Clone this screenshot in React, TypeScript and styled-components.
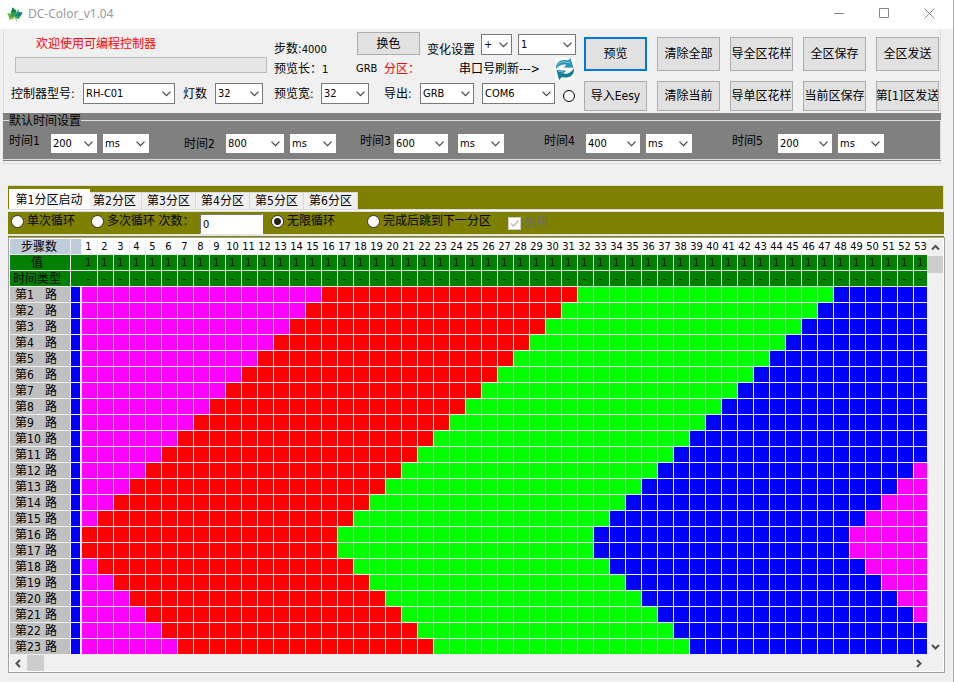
import React from "react";
import styled, { createGlobalStyle, css } from "styled-components";

const uiFont = `"DejaVu Sans Condensed", "Noto Sans CJK SC", sans-serif`;

const GlobalStyle = createGlobalStyle`
  *, *::before, *::after { box-sizing: border-box; }
  html, body, #root { height: 100%; }
  body {
    margin: 0;
    overflow: hidden;
    background: #f0f0f0;
    color: #000;
    font: 12px/14px ${uiFont};
  }
  button, input, select { font: inherit; color: inherit; margin: 0; }
`;

const Window = styled.div`
  height: 100%;
  display: flex;
  flex-direction: column;
  border-right: 1px solid #a9a9a9;
`;

/* Title bar */

const TitleBar = styled.header`
  flex: none;
  display: flex;
  align-items: center;
  height: 29px;
  padding: 0 1px 2px 7px;
  background: #fff;
`;

const Title = styled.h1`
  flex: 1;
  margin: 0 0 0 5px;
  color: #999;
  font: 12px/16px "Noto Sans", sans-serif;
`;

const CaptionButton = styled.button`
  width: 45px;
  height: 26px;
  padding: 0;
  border: 0;
  background: none;
  display: grid;
  place-items: center;
`;

/* Settings panel */

const SettingsPanel = styled.section`
  flex: none;
  margin: 0 12px 0 3px;
  padding-bottom: 2px;
  border: 1px solid #dcdcdc;
  border-top: 0;
`;

const Controls = styled.div`
  display: flex;
  height: 84px;
  padding: 3px 1px 0 7px;
`;

const DeviceColumn = styled.div`
  flex: none;
  width: 263px;
`;

const Welcome = styled.p`
  margin: 5px 0 6px 25px;
  color: #f00;
`;

const Progress = styled.div`
  width: 252px;
  height: 16px;
  margin: 0 0 10px 4px;
  border: 1px solid #bcbcbc;
  background: #e6e6e6;
`;

const FieldRow = styled.div<{ $columns: string; $height: number }>`
  display: grid;
  grid-template-columns: ${(p) => p.$columns};
  height: ${(p) => p.$height}px;
  align-items: center;
  white-space: nowrap;
`;

const PreviewColumn = styled.div`
  flex: none;
  width: 310px;
`;

const Small = styled.span`
  font-size: 11px;
`;

const Danger = styled.span`
  color: #f00;
`;

const LowText = styled.span`
  align-self: end;
`;

const SelectBox = styled.span<{ $width: number; $flat?: boolean }>`
  position: relative;
  display: block;
  flex: none;
  width: ${(p) => p.$width}px;
  height: ${(p) => (p.$flat ? 19 : 21)}px;

  select {
    appearance: none;
    display: block;
    width: 100%;
    height: 100%;
    padding: 0 0 0 2px;
    border: ${(p) => (p.$flat ? "0" : "1px solid #7a7a7a")};
    border-radius: 0;
    background: #fff;
    font-size: 11px;
    outline: 0;
  }

  svg {
    position: absolute;
    right: 4px;
    top: calc(50% - 3px);
    pointer-events: none;
  }
`;

const IconButton = styled.button`
  display: block;
  width: 20px;
  height: 22px;
  padding: 0;
  border: 0;
  background: #fff;
`;

const StatusLamp = styled.span`
  width: 12px;
  height: 12px;
  margin-top: 5px;
  border: 1px solid #000;
  border-radius: 50%;
  background: #f8f8f8;
`;

const PushButton = styled.button<{ $active?: boolean }>`
  min-width: 0;
  padding: 0;
  border: ${(p) => (p.$active ? "2px solid #0078d7" : "1px solid #adadad")};
  border-radius: 0;
  background: #e1e1e1;
  white-space: nowrap;
  display: flex;
  align-items: center;
  justify-content: center;
  overflow: hidden;
`;

const ColorButton = styled(PushButton)`
  width: 63px;
  height: 23px;
  align-self: start;
`;

const ActionGrid = styled.div`
  flex: 1;
  min-width: 0;
  display: grid;
  grid-template-columns: repeat(5, minmax(0, 1fr));
  grid-template-rows: 34px 30px;
  gap: 10px;
  padding-top: 5px;
`;

const TimeBand = styled.div`
  margin: 0 -1px;
  padding-bottom: 1px;
  background: #808080;
`;

const TimeSet = styled.fieldset`
  margin: 0;
  padding: 7px 0 6px 6px;
  border: 1px solid #dcdcdc;
  border-left: 0;
  display: grid;
  grid-template-columns: 175fr 176fr 184fr 188fr 208fr;

  legend {
    height: 14px;
    padding: 0;
    line-height: 16px;
  }
`;

const TimeGroup = styled.div<{ $gap: number }>`
  display: flex;
  align-items: flex-start;
  gap: ${(p) => p.$gap}px;
`;

const TimeLabel = styled.label<{ $width: number; $low?: boolean }>`
  width: ${(p) => p.$width}px;
  margin-right: -${(p) => (p.$width > 34 ? 6 : 10)}px;
  padding-top: ${(p) => (p.$low ? 3 : 0)}px;
`;

/* Zones */

const Zones = styled.section`
  flex: 1;
  min-height: 0;
  display: flex;
  flex-direction: column;
  margin: 21px 8px 9px 8px;
`;

const TabStrip = styled.div`
  flex: none;
  display: flex;
  align-items: flex-end;
  height: 24px;
  margin-right: 1px;
  padding-left: 1px;
  border: 1px solid #dcdcdc;
  border-width: 1px 1px 0 0;
  background: #808000;
`;

const Tab = styled.button<{ $active?: boolean }>`
  width: 54px;
  height: 17px;
  padding: 0;
  border: 1px solid #d9d9d9;
  border-width: 1px 1px 0 0;
  background: #f0f0f0;
  white-space: nowrap;

  ${(p) =>
    p.$active &&
    css`
      z-index: 1;
      width: 81px;
      height: 20px;
      margin-right: -2px;
      background: #fff;
      border-color: #fff;
    `}
`;

const TabEdge = styled.div`
  flex: none;
  height: 3px;
  margin: 0 4px 0 1px;
  border: 1px solid #d9d9d9;
  border-width: 1px 1px 1px 0;
  background: #fff;
`;

const LoopBar = styled.div`
  flex: none;
  display: flex;
  align-items: flex-start;
  height: 25px;
  margin-right: 1px;
  padding: 2px 0 0 3px;
  border-bottom: 1px solid #808000;
  background: linear-gradient(#808000, #808000) top / 100% 22px no-repeat #e8e8d8;
`;

const Choice = styled.label<{ $width: number }>`
  display: flex;
  align-items: center;
  gap: 3px;
  width: ${(p) => p.$width}px;
  white-space: nowrap;

  input {
    appearance: none;
    flex: none;
    width: 13px;
    height: 13px;
    border: 1px solid #333;
    border-radius: 50%;
    background: #fff;
  }

  input:checked {
    background: radial-gradient(circle, #222 0 3px, #fff 4px);
  }
`;

const CountInput = styled.input`
  width: 63px;
  height: 20px;
  margin-right: 8px;
  padding: 0 0 0 2px;
  border: 1px solid #7a7a7a;
  border-color: #7a7a7a #fff #fff #7a7a7a;
  border-radius: 0;
  background: #fff;
  font-size: 11px;
`;

const EnableChoice = styled.label`
  display: grid;
  grid-template-columns: 13px auto;
  gap: 3px;
  align-items: center;
  margin-top: 2px;
  color: #6b6b7c;

  input, svg {
    grid-area: 1 / 1;
  }

  input {
    appearance: none;
    width: 13px;
    height: 13px;
    border: 1px solid #ccc;
    background: #fff;
  }
`;

/* Step grid */

const GridFrame = styled.div`
  flex: 1;
  min-height: 0;
  display: grid;
  grid-template-columns: minmax(0, 1fr) 16px;
  grid-template-rows: minmax(0, 1fr) 16px;
  border: 1px solid #a0a0a6;
  outline: 1px solid #fff;
  outline-offset: -2px;
  padding: 1px;
  background: #f0f0f0;
`;

const GridView = styled.div`
  overflow: hidden;
`;

const StepTable = styled.table`
  width: 920px;
  table-layout: fixed;
  border-collapse: separate;
  border-spacing: 0;

  th, td {
    height: 16px;
    padding: 0 2px 0 0;
    border: 1px solid #f0f0f0;
    border-width: 0 1px 1px 0;
    font-weight: normal;
    font-size: 11px;
    line-height: 14px;
    text-align: center;
    white-space: nowrap;
    overflow: visible;
  }

  th:first-child { font-size: 12px; }
  tbody th:first-child { padding-right: 6px; }
  col.label { width: 61px; }
  col.marker { width: 11px; }
`;

const StepRow = styled.tr`
  th { background: #fff; }
  th:nth-child(-n + 2) { background: #bfcddb; }
`;

const GreenRow = styled.tr`
  th, td { background: #008000; }
  th:nth-child(2) { border-right-width: 0; }
`;

const RowLabel = styled.th`
  background: #c0c0c0;

  span {
    display: inline-block;
    width: 30px;
    text-align: left;
  }
  span + span { width: 14px; }
`;

const Cell = styled.td<{ $color: string }>`
  background: ${(p) => p.$color};
`;

const MarkerCell = styled.td`
  background: #00f;

  && { border-right-width: 2px; }
`;

const ScrollTrack = styled.div<{ $vertical?: boolean }>`
  display: flex;
  flex-direction: ${(p) => (p.$vertical ? "column" : "row")};
  background: #f0f0f0;

  > :last-child { ${(p) => (p.$vertical ? "margin-top" : "margin-left")}: auto; }
`;

const ScrollButton = styled.button`
  flex: none;
  width: 17px;
  height: 17px;
  padding: 0;
  border: 0;
  background: none;
  display: grid;
  place-items: center;
`;

const ScrollThumb = styled.div`
  width: 17px;
  height: 17px;
  background: #cdcdcd;
`;

const Chevron = () => (
  <svg width="9" height="6" viewBox="0 0 9 6" fill="none" stroke="#444" strokeWidth="1.2" aria-hidden="true">
    <path d="M0.5 0.7 4.5 4.7 8.5 0.7" />
  </svg>
);

const ScrollArrow = ({ d }: { d: string }) => (
  <svg width="9" height="9" viewBox="0 0 9 9" fill="none" stroke="#505050" strokeWidth="2" aria-hidden="true">
    <path d={d} />
  </svg>
);

const Leaf = () => (
  <svg width="16" height="16" viewBox="0 0 16 16" aria-hidden="true">
    <path d="M8 10 2.5 13.8 1.8 10.8 0.2 7 4.4 7.8z" fill="#5fb548" />
    <path d="M8 10 2.6 13.4 7 13.2z" fill="#a7c83c" />
    <path d="M8 10 4 6.4 5.4 1.2 8.7 4.3 9.5 7z" fill="#087c43" />
    <path d="M4 7.6 5 6.6 9 6 10 9 8 10.5 3.5 11z" fill="#2fa04c" />
    <path d="M8 10 9.3 5.8 12 3 11.6 6.2z" fill="#48b649" />
    <path d="M8 10 11.3 6 15.7 6.4 14.4 9 12.6 11.2z" fill="#187c88" />
    <path d="M8 10 12.6 10.7 11.6 13.2 9 12z" fill="#2aa453" />
    <path d="M8 10 9.6 15" stroke="#4a9468" strokeWidth="0.7" />
  </svg>
);

const RefreshIcon = () => (
  <svg width="20" height="22" viewBox="0 0 20 22" aria-hidden="true">
    <path d="M1 11C0.5 4 6.5 0.8 13 2.6L15.5 0 18.5 9.8 8.5 9.4 11.4 6.8C8 5.8 4.5 7 1 11z" fill="#2796b5" />
    <path d="M2.2 7.4C4.2 3.8 9 3 14 4.8L15.6 3" fill="none" stroke="#7fcbdc" strokeWidth="1" />
    <path d="M19 10.5C19.8 18 13 21 7 19L4 22 1.5 12 11 12.8 8.4 15.4C12 16.6 15.5 15 19 10.5z" fill="#127d9d" />
    <path d="M3 13.4 8 13.8 6.4 15.8" fill="none" stroke="#68bdd2" strokeWidth="1" />
  </svg>
);

type SelectProps = { label: string; value: string; width: number; flat?: boolean; id?: string };

const Select = ({ label, value, width, flat, id }: SelectProps) => (
  <SelectBox $width={width} $flat={flat}>
    <select id={id} aria-label={label} defaultValue={value}>
      <option>{value}</option>
    </select>
    <Chevron />
  </SelectBox>
);

const actions = [
  "预览", "清除全部", "导全区花样", "全区保存", "全区发送",
  "导入Eesy", "清除当前", "导单区花样", "当前区保存", "第[1]区发送",
];

const times = [
  { value: "200", label: 42, width: 46, gap: 6 },
  { value: "800", label: 42, width: 58, gap: 6, low: true },
  { value: "600", label: 34, width: 54, gap: 10 },
  { value: "400", label: 42, width: 54, gap: 6 },
  { value: "200", label: 46, width: 54, gap: 6 },
];

const steps = Array.from({ length: 53 }, (_, i) => i + 1);
const channels = Array.from({ length: 23 }, (_, i) => i + 1);
const palette = ["#f0f", "#f00", "#0f0", "#00f"];

/* Bands of 16 steps slide left down to channel 16, then mirror back. */
const cellColor = (channel: number, step: number) => {
  const shift = channel <= 16 ? 16 - channel : channel - 17;
  const band = Math.floor((step - 1 - shift) / 16) + 1;
  return palette[band % palette.length];
};

export default function App() {
  return (
    <>
      <GlobalStyle />
      <Window>
        <TitleBar>
          <Leaf />
          <Title>DC-Color_v1.04</Title>
          <CaptionButton aria-label="最小化">
            <svg width="11" height="11" stroke="#888"><path d="M0 5.5h10" /></svg>
          </CaptionButton>
          <CaptionButton aria-label="最大化">
            <svg width="11" height="11" stroke="#888" fill="none"><path d="M.5 .5h9v9h-9z" /></svg>
          </CaptionButton>
          <CaptionButton aria-label="关闭">
            <svg width="11" height="11" stroke="#888"><path d="M.5 .5l10 10M10.5 .5l-10 10" /></svg>
          </CaptionButton>
        </TitleBar>

        <SettingsPanel>
          <Controls>
            <DeviceColumn>
              <Welcome>欢迎使用可编程控制器</Welcome>
              <Progress role="progressbar" aria-label="进度" aria-valuenow={0} />
              <FieldRow $columns="72px 100px 32px 48px" $height={21}>
                <label htmlFor="model">控制器型号:</label>
                <Select id="model" label="控制器型号" value="RH-C01" width={92} />
                <label htmlFor="lamps">灯数</label>
                <Select id="lamps" label="灯数" value="32" width={48} />
              </FieldRow>
            </DeviceColumn>

            <PreviewColumn>
              <FieldRow $columns="83px 70px 54px 37px 58px" $height={25}>
                <LowText>步数:<Small>4000</Small></LowText>
                <ColorButton>换色</ColorButton>
                <LowText>变化设置</LowText>
                <Select label="变化方向" value="+" width={31} />
                <Select label="变化量" value="1" width={58} />
              </FieldRow>
              <FieldRow $columns="82px 28px 75px 96px 21px" $height={24}>
                <span>预览长：<Small>1</Small></span>
                <Small>GRB</Small>
                <Danger>分区：</Danger>
                <span>串口号刷新---&gt;</span>
                <IconButton aria-label="刷新串口"><RefreshIcon /></IconButton>
              </FieldRow>
              <FieldRow $columns="47px 63px 36px 62px 81px 13px" $height={25}>
                <label htmlFor="preview">预览宽:</label>
                <Select id="preview" label="预览宽" value="32" width={48} />
                <label htmlFor="order">导出:</label>
                <Select id="order" label="导出" value="GRB" width={54} />
                <Select label="串口号" value="COM6" width={73} />
                <StatusLamp />
              </FieldRow>
            </PreviewColumn>

            <ActionGrid>
              {actions.map((text, i) => (
                <PushButton key={text} $active={i === 0}>{text}</PushButton>
              ))}
            </ActionGrid>
          </Controls>

          <TimeBand>
            <TimeSet>
              <legend>默认时间设置</legend>
              {times.map((t, i) => (
                <TimeGroup key={i} $gap={t.gap}>
                  <TimeLabel htmlFor={`time${i}`} $width={t.label} $low={t.low}>时间{i + 1}</TimeLabel>
                  <Select id={`time${i}`} label={`时间${i + 1}`} value={t.value} width={t.width} flat />
                  <Select label={`时间${i + 1}单位`} value="ms" width={46} flat />
                </TimeGroup>
              ))}
            </TimeSet>
          </TimeBand>
        </SettingsPanel>

        <Zones>
          <TabStrip role="tablist">
            <Tab role="tab" aria-selected $active>第1分区启动</Tab>
            {[2, 3, 4, 5, 6].map((n) => (
              <Tab key={n} role="tab">第{n}分区</Tab>
            ))}
          </TabStrip>
          <TabEdge />
          <LoopBar>
            <Choice $width={80}><input type="radio" name="loop" />单次循环</Choice>
            <Choice $width={109}><input type="radio" name="loop" />多次循环 次数：</Choice>
            <CountInput aria-label="次数" defaultValue="0" />
            <Choice $width={96}><input type="radio" name="loop" defaultChecked />无限循环</Choice>
            <Choice $width={141}><input type="radio" name="loop" />完成后跳到下一分区</Choice>
            <EnableChoice>
              <input type="checkbox" defaultChecked disabled />
              <svg width="13" height="13" fill="none" stroke="#bbb" strokeWidth="1.5"><path d="M3 6.5 5.5 9 10.5 3.5" /></svg>
              启用
            </EnableChoice>
          </LoopBar>

          <GridFrame>
            <GridView>
              <StepTable>
                <colgroup>
                  <col className="label" />
                  <col className="marker" />
                  {steps.map((s) => <col key={s} />)}
                </colgroup>
                <thead>
                  <StepRow>
                    <th>步骤数</th>
                    <th />
                    {steps.map((s) => <th key={s}>{s}</th>)}
                  </StepRow>
                </thead>
                <tbody>
                  <GreenRow>
                    <th>值</th>
                    <th />
                    {steps.map((s) => <td key={s}>1</td>)}
                  </GreenRow>
                  <GreenRow>
                    <th>时间类型</th>
                    <th />
                    {steps.map((s) => <td key={s}>-</td>)}
                  </GreenRow>
                  {channels.map((c) => (
                    <tr key={c}>
                      <RowLabel><span>第{c}</span><span>路</span></RowLabel>
                      <MarkerCell />
                      {steps.map((s) => <Cell key={s} $color={cellColor(c, s)} />)}
                    </tr>
                  ))}
                </tbody>
              </StepTable>
            </GridView>
            <ScrollTrack $vertical>
              <ScrollButton aria-label="向上"><ScrollArrow d="M1 6.5 4.5 3 8 6.5" /></ScrollButton>
              <ScrollThumb />
              <ScrollButton aria-label="向下"><ScrollArrow d="M1 3 4.5 6.5 8 3" /></ScrollButton>
            </ScrollTrack>
            <ScrollTrack>
              <ScrollButton aria-label="向左"><ScrollArrow d="M6 1 2.5 4.5 6 8" /></ScrollButton>
              <ScrollThumb />
              <ScrollButton aria-label="向右"><ScrollArrow d="M3 1 6.5 4.5 3 8" /></ScrollButton>
            </ScrollTrack>
          </GridFrame>
        </Zones>
      </Window>
    </>
  );
}
